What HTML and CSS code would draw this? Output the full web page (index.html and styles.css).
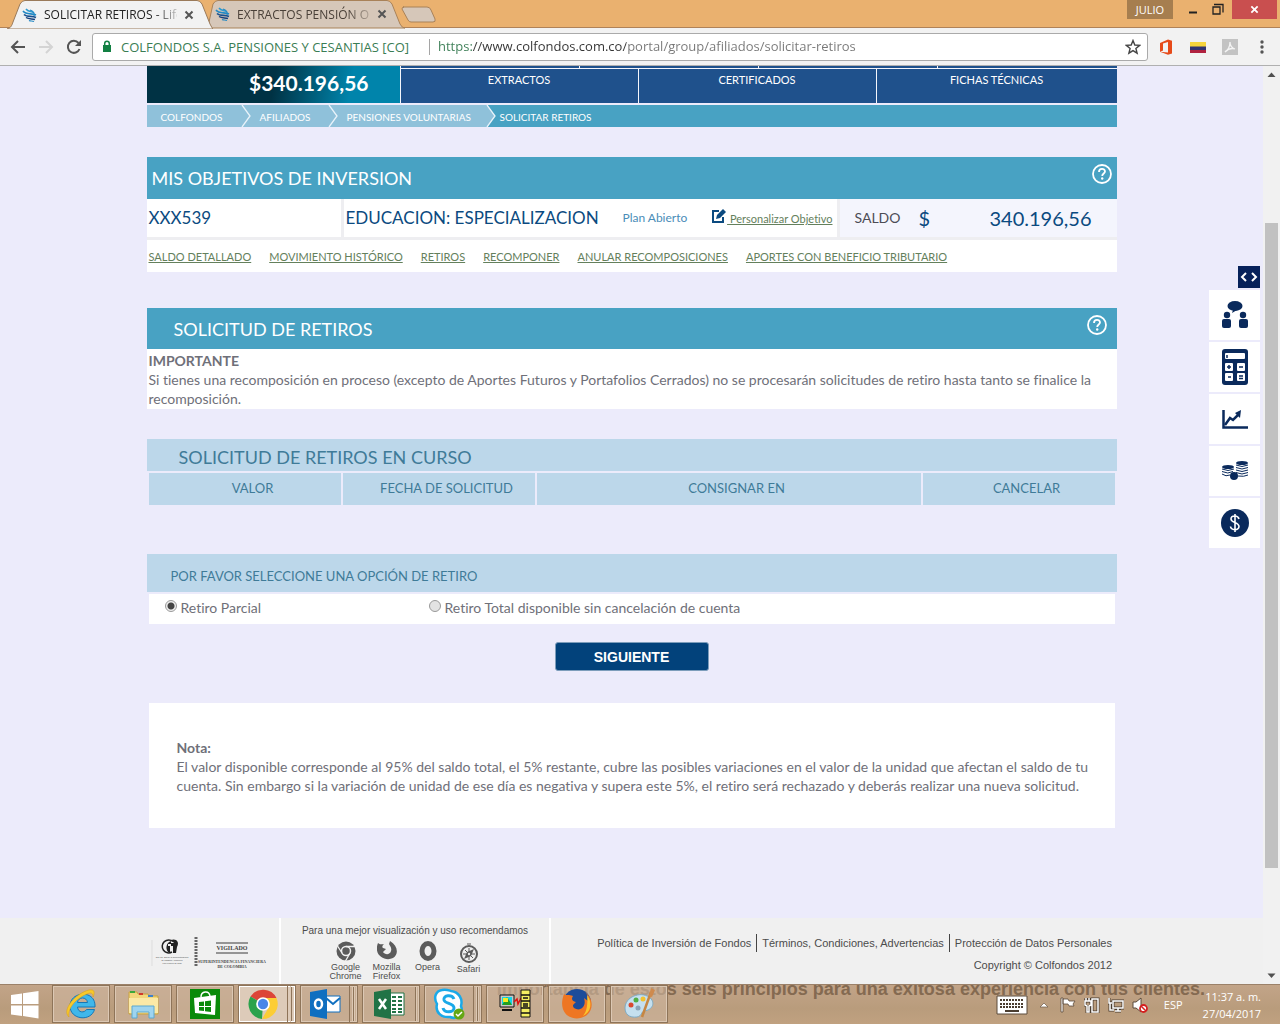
FILE: index.html
```html
<!DOCTYPE html>
<html lang="es">
<head>
<meta charset="utf-8">
<title>Solicitar retiros</title>
<link rel="stylesheet" href="styles.css">
</head>
<body>
<svg class="defs" aria-hidden="true">
  <symbol id="bird" viewBox="0 0 16 16"><path d="M4 2c2 3 5 2 8 4" fill="none" stroke="#2f9ad0" stroke-width="1.500"/><path d="M1 4c3 4 9 2 13 4" fill="none" stroke="#2389c4" stroke-width="1.600"/><path d="M2 7.500c3 3 8 1 12 3" fill="none" stroke="#174f8e" stroke-width="1.700"/><path d="M4 10.500c3 2 6 1 9 2" fill="none" stroke="#16407c" stroke-width="1.500"/><path d="M7 13.500c2 1 3 0 5 1M8 3c3 1 5 3 4 6" fill="none" stroke="#2389c4" stroke-width="1.200"/></symbol>
  <symbol id="x" viewBox="0 0 10 10"><path d="M1.500 1.500l7 7M8.500 1.500l-7 7" stroke="currentColor" stroke-width="2"/></symbol>
  <symbol id="help" viewBox="0 0 20 20"><circle cx="10" cy="10" r="9" fill="none" stroke="#fff" stroke-width="1.800"/><path d="M7 8c0-4 6-4 6-.5 0 2-2.800 2-2.800 4.500" fill="none" stroke="#fff" stroke-width="1.800"/><circle cx="10.200" cy="14.500" r="1.200" fill="#fff"/></symbol>
</svg>

<header class="titlebar">
  <div class="tab tab-active">
    <svg class="tab-shape" viewBox="0 0 206 29"><path d="M0 29C4 28 5 25 6 22L13 4Q15 .5 18 .5H190Q193 .5 195 4L203 24Q205 28 206 29z" fill="#f2f2f2" stroke="#9a7a5a"/></svg>
    <svg class="tab-icon"><use href="#bird"/></svg><span class="tab-title">SOLICITAR RETIROS - Life</span>
    <button class="tab-close" aria-label="Cerrar pestaña"><svg><use href="#x"/></svg></button>
  </div>
  <div class="tab tab-back">
    <svg class="tab-shape" viewBox="0 0 206 29"><path d="M1 28L6 22L10 4Q12 .5 15 .5H184Q187 .5 189 4L197 24Q199 28 202 28z" fill="#d6c7b9" stroke="#a98259"/></svg>
    <svg class="tab-icon"><use href="#bird"/></svg><span class="tab-title">EXTRACTOS PENSIÓN O</span>
    <button class="tab-close" aria-label="Cerrar pestaña"><svg><use href="#x"/></svg></button>
  </div>
  <button class="new-tab" aria-label="Nueva pestaña"><svg viewBox="0 0 36 18"><path d="M2 1H26Q29 1 30 4L34 13Q35 16 32 16H10Q8 16 7 14L1 3Q1 1 3 1z" fill="#d6c7b9" stroke="#a98259"/></svg></button>
  <div class="window-controls">
    <button class="user">JULIO</button>
    <button class="win" aria-label="Minimizar"><svg viewBox="0 0 26 19"><path d="M9 12.500h8" stroke="#222" stroke-width="2"/></svg></button>
    <button class="win" aria-label="Restaurar"><svg viewBox="0 0 26 19"><path d="M7 7h7v7h-7zM8 4.500h9v8" fill="none" stroke="#222" stroke-width="1.300"/></svg></button>
    <button class="win win-close" aria-label="Cerrar"><svg class="close-icon"><use href="#x"/></svg></button>
  </div>
</header>

<nav class="toolbar">
  <button aria-label="Atrás"><svg viewBox="0 0 16 16"><path d="M15 8H2M8 2L2 8l6 6" fill="none" stroke="#555" stroke-width="2"/></svg></button>
  <button aria-label="Adelante"><svg viewBox="0 0 16 16"><path d="M1 8h13M8 2l6 6-6 6" fill="none" stroke="#d4d4d4" stroke-width="2"/></svg></button>
  <button aria-label="Recargar"><svg viewBox="0 0 16 16"><path d="M13.500 10A6 6 0 1 1 12.500 4" fill="none" stroke="#555" stroke-width="2"/><path d="M15 1v6H9z" fill="#555"/></svg></button>
  <div class="address">
    <svg class="lock" viewBox="0 0 10 13"><path d="M1 5h8v7H1z" fill="#128043"/><path d="M2.700 6V3.500a2.300 2.300 0 0 1 4.600 0V6" fill="none" stroke="#128043" stroke-width="1.500"/></svg>
    <label class="identity" for="url">COLFONDOS S.A. PENSIONES Y CESANTIAS [CO]</label>
    <input id="url" class="url" type="text" value="https://www.colfondos.com.co/portal/group/afiliados/solicitar-retiros">
    <button aria-label="Marcar"><svg viewBox="0 0 16 16"><path d="M8 1.500l1.800 4.500 4.900.3-3.800 3.100 1.200 4.800L8 11.600l-4.100 2.600 1.200-4.800L1.300 6.300 6.200 6z" fill="none" stroke="#444" stroke-width="1.400"/></svg></button>
  </div>
  <div class="extensions">
    <button aria-label="Office"><svg viewBox="0 0 16 16"><path d="M2 4l8-3.500 4 1.200v12.800l-4 1.200-8-3 8 .8V3L5 4.500v7L2 13z" fill="#e64a19"/></svg></button>
    <button aria-label="Colombia"><svg viewBox="0 0 16 16"><path d="M0 3h16v5H0z" fill="#f5d43c"/><path d="M0 7.500h16v4H0z" fill="#303470"/><path d="M0 11h16v3H0z" fill="#b02240"/></svg></button>
    <button aria-label="PDF"><svg viewBox="0 0 16 16"><path d="M0 0h16v16H0z" fill="#c3c3c3"/><path d="M3 13c3-2 5-6 5-10 0 4 2 6 5 7-3-1-7 0-10 3z" fill="none" stroke="#f4f4f4" stroke-width="1.300"/></svg></button>
    <button aria-label="Menú"><svg viewBox="0 0 16 16"><g fill="#555"><circle cx="8" cy="3" r="1.700"/><circle cx="8" cy="8" r="1.700"/><circle cx="8" cy="13" r="1.700"/></g></svg></button>
  </div>
</nav>

<div class="viewport">
  <div class="page">
    <main class="content">
      <section class="hero">
        <strong class="balance">$340.196,56</strong>
        <div class="menus">
          <div class="menu-top"><i></i><i></i><i></i><i></i></div>
          <nav class="menu"><a href="#">EXTRACTOS</a><a href="#">CERTIFICADOS</a><a href="#">FICHAS TÉCNICAS</a></nav>
        </div>
      </section>
      <nav class="crumbs">
        <a href="#" class="crumb-1">COLFONDOS</a><svg viewBox="0 0 10 22"><path d="M0 0h1l8 11-8 11H0z" fill="#8fc1da"/><path d="M1 0l8 11-8 11" fill="none" stroke="#e9f3fa" stroke-width="1.300"/></svg>
        <a href="#" class="crumb-2">AFILIADOS</a><svg viewBox="0 0 10 22"><path d="M0 0h1l8 11-8 11H0z" fill="#8fc1da"/><path d="M1 0l8 11-8 11" fill="none" stroke="#e9f3fa" stroke-width="1.300"/></svg>
        <a href="#" class="crumb-3">PENSIONES VOLUNTARIAS</a><svg class="crumb-end" viewBox="0 0 10 22"><path d="M0 0h1l8 11-8 11H0z" fill="#8fc1da"/><path d="M1 0l8 11-8 11" fill="none" stroke="#e9f3fa" stroke-width="1.300"/></svg>
        <span class="crumb-here">SOLICITAR RETIROS</span>
      </nav>

      <section class="goals">
        <h2 class="bar bar-goals">MIS OBJETIVOS DE INVERSION<button aria-label="Ayuda"><svg><use href="#help"/></svg></button></h2>
        <div class="goal">
          <div class="goal-id">XXX539</div>
          <div class="goal-name"><span>EDUCACION: ESPECIALIZACION</span><span class="plan">Plan Abierto</span>
            <a href="#" class="edit"><svg viewBox="0 0 16 16"><path d="M8 3H2v11h10V9" fill="none" stroke="#0b4a80" stroke-width="2"/><path d="M5 11l1-4 6-6 3 3-6 6z" fill="#0b4a80"/></svg><span>&nbsp;Personalizar Objetivo</span></a></div>
          <div class="goal-balance"><span class="saldo">SALDO</span><span>$</span><span class="amount">340.196,56</span></div>
        </div>
        <nav class="links"><a href="#">SALDO DETALLADO</a><a href="#">MOVIMIENTO HISTÓRICO</a><a href="#">RETIROS</a><a href="#">RECOMPONER</a><a href="#">ANULAR RECOMPOSICIONES</a><a href="#">APORTES CON BENEFICIO TRIBUTARIO</a></nav>
      </section>

      <section class="request">
        <h2 class="bar bar-request">SOLICITUD DE RETIROS<button aria-label="Ayuda"><svg><use href="#help"/></svg></button></h2>
        <div class="notice"><b>IMPORTANTE</b><p>Si tienes una recomposición en proceso (excepto de Aportes Futuros y Portafolios Cerrados) no se procesarán solicitudes de retiro hasta tanto se finalice la recomposición.</p></div>
      </section>

      <section class="pending">
        <h3>SOLICITUD DE RETIROS EN CURSO</h3>
        <table><thead><tr><th class="quarter">VALOR</th><th class="quarter">FECHA DE SOLICITUD</th><th>CONSIGNAR EN</th><th class="quarter">CANCELAR</th></tr></thead></table>
      </section>

      <form class="options">
        <h3>POR FAVOR SELECCIONE UNA OPCIÓN DE RETIRO</h3>
        <div class="choices">
          <label><input type="radio" name="retiro" checked>Retiro Parcial</label>
          <label><input type="radio" name="retiro">Retiro Total disponible sin cancelación de cuenta</label>
        </div>
        <button type="button" class="next">SIGUIENTE</button>
      </form>

      <section class="note"><b>Nota:</b><p>El valor disponible corresponde al 95% del saldo total, el 5% restante, cubre las posibles variaciones en el valor de la unidad que afectan el saldo de tu cuenta. Sin embargo si la variación de unidad de ese día es negativa y supera este 5%, el retiro será rechazado y deberás realizar una nueva solicitud.</p></section>
    </main>

    <footer class="footer">
      <div class="seals">
        <svg viewBox="0 0 112 34"><path d="M1 3v26" stroke="#ddd"/><path d="M22 4.500A6.500 6.500 0 1 0 21 15" fill="none" stroke="#222" stroke-width="1.500"/><path d="M20 4a7 7 0 0 0-3 11l2 1V9h-2V7h3zM20 3c5-2 9 2 6 7l-1 6h-3V9h-2V6h3z" fill="#222"/><text x="21" y="21" class="seal-tiny">Res. No. 238 de la Superintendencia</text><text x="21" y="24" class="seal-tiny">de Industria y Comercio</text><text x="21" y="27" class="seal-tiny">9 de Febrero de 1987</text><path d="M45 0v30" stroke="#666" stroke-width="3" stroke-dasharray="2 1"/><path d="M65 6h32M65 16h32" stroke="#777" stroke-width="1.500"/><text x="81" y="13" class="seal-big">VIGILADO</text><text x="81" y="26" class="seal-small">SUPERINTENDENCIA FINANCIERA</text><text x="81" y="31" class="seal-small">DE COLOMBIA</text></svg>
      </div>
      <div class="browsers">
        <p>Para una mejor visualización y uso recomendamos</p>
        <ul>
          <li><svg viewBox="0 0 20 20"><circle cx="10" cy="10" r="9.500" fill="#5b5b5b"/><circle cx="10" cy="10" r="4.500" fill="#5b5b5b" stroke="#f0f0f0" stroke-width="1.500"/><path d="M10 5.500h9M6 12L1.500 5M14 12l-4.500 8" stroke="#f0f0f0" stroke-width="1.300"/></svg>Google<br>Chrome</li>
          <li><svg viewBox="0 0 20 20"><path d="M1 2c2 2 4 1 6 1-2 2-2 3-1 4l3 1-3 3c2 3 7 3 8-1 1-3-1-5-2-7l1-3c8 5 9 13 3 17C8 21-4 14 1 2z" fill="#5b5b5b"/></svg>Mozilla<br>Firefox</li>
          <li><svg viewBox="0 0 20 20"><ellipse cx="10" cy="10" rx="6" ry="7.500" fill="none" stroke="#5b5b5b" stroke-width="5"/></svg>Opera</li>
          <li class="safari"><svg viewBox="0 0 20 20"><circle cx="10" cy="11" r="8" fill="none" stroke="#5b5b5b" stroke-width="2"/><path d="M15 6l-3 7-7 3 3-7z" fill="#5b5b5b"/><path d="M10 5v12M4 11h12M6 7l8 8M8 1h4" stroke="#5b5b5b"/><circle cx="10" cy="11" r="1.200" fill="#f0f0f0"/></svg>Safari</li>
        </ul>
      </div>
      <div class="legal">
        <nav><a href="#">Política de Inversión de Fondos</a><a href="#">Términos, Condiciones, Advertencias</a><a href="#">Protección de Datos Personales</a></nav>
        <p>Copyright © Colfondos 2012</p>
      </div>
    </footer>

    <aside class="dock">
      <button class="toggle" aria-label="Contraer"><svg viewBox="0 0 22 22"><path d="M8 7l-4 4 4 4M14 7l4 4-4 4" fill="none" stroke="#fff" stroke-width="2"/></svg></button>
      <button aria-label="Asesoría"><svg viewBox="0 0 28 36"><g fill="#0a2a5c"><ellipse cx="14" cy="9" rx="7.500" ry="5"/><path d="M12 13l4 0-5 3z"/><circle cx="6" cy="18" r="3.200"/><circle cx="22" cy="18" r="3.200"/><rect x="1" y="22" width="9" height="9" rx="2"/><rect x="18" y="22" width="9" height="9" rx="2"/></g></svg></button>
      <button aria-label="Calculadora"><svg viewBox="0 0 28 36"><rect x="1" y="0" width="26" height="36" rx="3" fill="#0a2a5c"/><g fill="#fff"><rect x="4" y="4" width="20" height="6" rx="1"/><rect x="4" y="14" width="8" height="8" rx="1"/><rect x="16" y="14" width="8" height="8" rx="1"/><rect x="4" y="24" width="8" height="8" rx="1"/><rect x="16" y="24" width="8" height="8" rx="1"/></g><path d="M6 18h4M8 16v4M18 18h4M7 28h3M18 27h4M18 29.500h4M6 6v3" stroke="#0a2a5c" stroke-width="1.500"/></svg></button>
      <button aria-label="Rentabilidad"><svg viewBox="0 0 28 36"><path d="M2.500 9v17.500H27" fill="none" stroke="#0a2a5c" stroke-width="2.500"/><path d="M4 24l5-7 3 2 6-6" fill="none" stroke="#0a2a5c" stroke-width="2.500"/><path d="M20 9l-1 8-5-5z" fill="#0a2a5c"/></svg></button>
      <button aria-label="Aportes"><svg viewBox="0 0 28 36"><g fill="#0a2a5c"><ellipse cx="7" cy="14" rx="6" ry="2"/><ellipse cx="21" cy="10" rx="6" ry="2"/><circle cx="13" cy="23" r="4"/></g><path d="M1 16q6 3 12 0M1 18.500q6 3 11 0M1 21q4 3 8 1M15 12q6 3 12 0M15 14.500q6 3 12 0M15 17q6 3 12 0M15 19.500q6 3 12 0M17 23q6 1 10-1" fill="none" stroke="#0a2a5c"/></svg></button>
      <button aria-label="Pagos"><svg viewBox="0 0 28 36"><circle cx="14" cy="18" r="14" fill="#0a2a5c"/><path d="M18 14c-1-4-8-4-8 0s8 3 8 7.500-8 4-8.500 0M14 9v18" fill="none" stroke="#fff" stroke-width="1.600"/></svg></button>
    </aside>
  </div>
  <div class="scrollbar"><svg viewBox="0 0 17 17"><path d="M4.500 11l4-4.500 4 4.500z" fill="#505050"/></svg><div class="track"><i></i></div><svg viewBox="0 0 17 17"><path d="M4.500 6.500l4 4.500 4-4.500z" fill="#505050"/></svg></div>
</div>

<footer class="taskbar">
  <p class="wallpaper">Importancia de estos seis principios para una exitosa experiencia con tus clientes.</p>
  <button class="start" aria-label="Inicio"><svg viewBox="0 0 28 28"><path d="M0 4l11-1.500V13H0zM12 2.300L27.500 0v13H12zM0 14.500h11V25L0 23.500zM12 14.500h15.500V27.500L12 25z" fill="#fff"/></svg></button>
  <button class="task" aria-label="Internet Explorer"><svg viewBox="0 0 32 32"><path d="M30 19H12.500c.5 6 7 6 9 2.500h8C26 34 5 32 5 18 5 3 31 1 30 19zM12.500 14.500h10c-.5-6-9.500-6-10 0z" fill="#3fb7ea" stroke="#1677b5"/><path d="M4 29C-4 22 11 5 24 2c6-1 6 3 4 7 0-4-2-5-6-3C12 10 2 20 4 29z" fill="#f7c92c" stroke="#d99d13" stroke-width=".5"/></svg></button>
  <button class="task" aria-label="Explorador"><svg viewBox="0 0 32 32"><path d="M2 4h8l1 2h10l1 2h9v18H2z" fill="#f3d77c" stroke="#c8a341"/><path d="M3 3h5v2H3z" fill="#3ba83b"/><path d="M12 5h4v2h-4z" fill="#d2392b"/><path d="M21 7h5v2h-5z" fill="#3d82ce"/><path d="M2 10h29v15H2z" fill="#fbe9a6"/><path d="M5 30V18h22v12h-5v-6H10v6z" fill="#9ed4ef" stroke="#5ba8d0"/></svg></button>
  <button class="task" aria-label="Tienda"><svg viewBox="0 0 32 32"><path d="M1 1h30v30H1z" fill="#0a8a0a"/><path d="M5 10l22-3-1 20-20-2z" fill="#fff"/><path d="M12 9c0-6 8-7 9-1" fill="none" stroke="#fff" stroke-width="1.500"/><path d="M10 14l5-.6V18h-5zM16 13.200l6-.7V18h-6zM10 19h5v4l-5-.5zM16 19h6v5l-6-.7z" fill="#0a8a0a"/></svg></button>
  <button class="task stacked current" aria-label="Chrome"><svg viewBox="0 0 32 32"><path d="M16 16L3.500 8.500A15 15 0 0 1 29.500 10z" fill="#dc4538"/><path d="M16 16L3.500 8.500A15 15 0 0 0 15 31z" fill="#2ba24c"/><path d="M16 10h13.500A15 15 0 0 1 15 31l7-12z" fill="#fccd34"/><circle cx="16" cy="16" r="6" fill="#4a86e8" stroke="#fff" stroke-width="1.700"/></svg></button>
  <button class="task stacked" aria-label="Outlook"><svg viewBox="0 0 32 32"><path d="M17 8h14v16H17z" fill="#fff" stroke="#0f6fc0"/><path d="M17 10l7 6 7-6" fill="none" stroke="#0f6fc0" stroke-width="2"/><path d="M1 4l17-3v30L1 28z" fill="#0f6fc0"/><ellipse cx="9.500" cy="16" rx="3.500" ry="4.500" fill="none" stroke="#fff" stroke-width="2.500"/></svg></button>
  <button class="task stacked-2" aria-label="Excel"><svg viewBox="0 0 32 32"><path d="M17 5h14v22H17z" fill="#fff" stroke="#217346"/><path d="M19 9h10M19 13h10M19 17h10M19 21h10M19 24h10" stroke="#217346" stroke-width="2" stroke-dasharray="4 2"/><path d="M1 4l17-3v30L1 28z" fill="#217346"/><path d="M6 11l7 10M13 11L6 21" stroke="#fff" stroke-width="2.500"/></svg></button>
  <button class="task stacked" aria-label="Skype"><svg viewBox="0 0 32 32"><path d="M9 2c4-1 6 0 9 1 8 1 12 8 10 15 3 8-4 14-11 11C8 30 2 24 4 16 0 9 3 3 9 2z" fill="#fff" stroke="#1aa9e8" stroke-width="2.500"/><path d="M21 11c-2-5-11-4-10 1 1 4 10 3 10 8s-10 5-11 0" fill="none" stroke="#1aa9e8" stroke-width="3"/><circle cx="26" cy="26" r="5.500" fill="#63a714"/><path d="M23 26l2 2 4-4" fill="none" stroke="#fff" stroke-width="1.500"/></svg></button>
  <button class="task" aria-label="Conexión remota"><svg viewBox="0 0 32 32"><path d="M1 7h14v12H1z" fill="#c8c8c8" stroke="#111"/><path d="M3 9h10v8H3z" fill="#14d4e8"/><path d="M8 9l5 8H3z" fill="#24a020"/><path d="M4 10h5v4H4z" fill="#f6ee20"/><path d="M3 22h10" stroke="#111" stroke-width="2"/><path d="M15 14l3-3 1 5 3-6" fill="none" stroke="#e01010" stroke-width="1.500"/><path d="M22 2h9v27h-9z" fill="#f4ee62" stroke="#111"/><path d="M22 7h9M22 13h9M22 20h9M22 25h9M24 10h5M24 16h5M24 18h5" stroke="#111" stroke-width="1.300"/></svg></button>
  <button class="task" aria-label="Firefox"><svg viewBox="0 0 32 32"><circle cx="16" cy="15" r="14" fill="#1d4c9a"/><path d="M3 6c2 2 5 0 9 2-2 3-1 5 3 6-3 3-4 3-2 6 6 4 13-1 10-10l4 3c1-4-1-7-3-9 8 6 9 17 2 23C14 36-5 27 3 6z" fill="#ee7623"/><path d="M26 7c6 8 4 17-4 21 4-5 5-12 4-21z" fill="#fbc52d"/></svg></button>
  <button class="task" aria-label="Paint"><svg viewBox="0 0 32 32"><path d="M2 20C2 9 17 3 26 9c7 5 4 13-5 14-3 1-2 5-7 6C6 30 2 26 2 20z" fill="#c5e0ef" stroke="#7fabc4"/><circle cx="8" cy="17" r="2.500" fill="#d9482f"/><circle cx="13" cy="12" r="2.500" fill="#50ae45"/><circle cx="20" cy="11" r="2.500" fill="#f1c232"/><circle cx="15" cy="20" r="2.500" fill="#8aa4b8"/><path d="M28 4L19 29" stroke="#c68642" stroke-width="2.500"/><path d="M26 8l2-8 4 2-3 7z" fill="#cf8a4d"/></svg></button>
  <div class="tray">
    <svg class="keyboard" viewBox="0 0 32 20"><path d="M1 1h30v18H1z" fill="#fff" stroke="#5a4a3a"/><path d="M4 5h24M4 9h24M4 12h24" stroke="#4a3d30" stroke-width="2" stroke-dasharray="2 1"/><path d="M9 16h14" stroke="#4a3d30" stroke-width="2"/></svg>
    <svg viewBox="0 0 16 16"><path d="M4 10l4-4 4 4z" fill="#fff" stroke="#6b5947" stroke-width=".7"/></svg>
    <svg viewBox="0 0 16 16"><path d="M1 1h2v14H1zM3 2h5l1 2h6l-2 3 1 2H9L8 7H3z" fill="#fff" stroke="#5a4a3a" stroke-width=".8"/></svg>
    <svg viewBox="0 0 16 16"><path d="M9 2h5v13H8V2zM1 4h6v4L5 9v6H3V9L1 8zM2 1v3M5 1v3" fill="none" stroke="#4a3d30" stroke-width="3"/><path d="M9 2h5v13H8V2zM1 4h6v4L5 9v6H3V9L1 8zM2 1v3M5 1v3" fill="none" stroke="#fff" stroke-width="1.500"/></svg>
    <svg viewBox="0 0 16 16"><path d="M5 4h10v7H5zM7 14h6M10 11v3M1 1v5h3M2 6v7h4" fill="none" stroke="#4a3d30" stroke-width="3"/><path d="M5 4h10v7H5zM7 14h6M10 11v3M1 1v5h3M2 6v7h4" fill="none" stroke="#fff" stroke-width="1.500"/></svg>
    <svg viewBox="0 0 16 16"><path d="M1 5h3l5-4v14l-5-4H1z" fill="#fff" stroke="#5a4a3a"/><circle cx="11.500" cy="11.500" r="3.500" fill="#fff" stroke="#d42020" stroke-width="1.800"/><path d="M9 9l5 5" stroke="#d42020" stroke-width="1.500"/></svg>
    <span class="lang">ESP</span>
    <time>11:37 a. m.<br>27/04/2017</time>
  </div>
</footer>
</body>
</html>
```
FILE: styles.css
```css
* { box-sizing: border-box; }
html, body { height: 100%; margin: 0; }
body { display: flex; flex-direction: column; overflow: hidden; font-family: Lato, "Open Sans", sans-serif; font-size: 14px; line-height: 19px; font-variant-ligatures: none; color: #6f7079; }
h2, h3, p, ul { margin: 0; padding: 0; font-weight: 400; }
button { padding: 0; border: 0; background: none; font: inherit; color: inherit; }
a { color: inherit; text-decoration: none; }
svg { display: block; flex: none; }
.defs { position: absolute; width: 0; height: 0; }

/* Browser window */
.titlebar { display: flex; flex: none; height: 28px; background: #eab16f; border-bottom: 1px solid #b08258; font-family: "Open Sans", sans-serif; }
.tab { position: relative; display: flex; align-items: center; width: 206px; height: 28px; padding-left: 15px; color: #222; font-size: 12px; }
.tab-active { z-index: 1; margin-left: 7px; height: 29px; }
.tab-back { width: 190px; padding-left: 2px; color: #4a4038; }
.tab-back .tab-shape { left: -10px; }
.tab-shape { position: absolute; left: 0; top: 0; width: 206px; height: 29px; }
.tab-icon { position: relative; width: 16px; height: 16px; }
.tab-title { position: relative; width: 133px; margin-left: 6px; white-space: nowrap; -webkit-mask-image: linear-gradient(90deg, #000 110px, transparent 140px); mask-image: linear-gradient(90deg, #000 110px, transparent 140px); }
.tab-close { position: relative; margin-left: 7px; color: #555; }
.tab-close svg, .close-icon { width: 10px; height: 10px; }
.new-tab svg { width: 36px; height: 18px; margin-top: 3px; }
.new-tab { margin-left: -2px; }
.window-controls { display: flex; align-items: flex-start; height: 19px; margin: 0 3px 0 auto; }
.user { width: 46px; height: 19px; margin-right: 7px; background: #a67e4f; color: #fff; font-size: 11px; }
.win { display: flex; align-items: center; justify-content: center; width: 26px; height: 19px; color: #fff; }
.win svg { width: 26px; height: 19px; }
.win-close { width: 45px; background: #c94f4f; }
.win .close-icon { width: 9px; height: 9px; }
.toolbar { display: flex; flex: none; align-items: center; height: 38px; padding: 0 10px; gap: 12px; background: #f2f2f2; border-bottom: 1px solid #b0b0b0; font-family: "Open Sans", sans-serif; }
.toolbar svg { width: 16px; height: 16px; }
.address { display: flex; flex: 1; align-items: center; height: 28px; margin-left: -2px; padding: 0 6px 0 9px; background: #fff; border: 1px solid #aaa; border-radius: 3px; font-size: 13px; }
.address .lock { width: 10px; height: 13px; }
.identity { width: 309px; margin-left: 9px; border-right: 1px solid #a5a5a5; color: #3a7d54; line-height: 16px; white-space: nowrap; }
.url { flex: 1; min-width: 0; margin-left: 8px; padding: 0; border: 0; outline: 0; font: inherit; color: transparent; background: linear-gradient(90deg, #3a7d54 34px, #333 34px, #333 188px, #777 188px); -webkit-background-clip: text; background-clip: text; }
.extensions { display: flex; gap: 16px; margin-left: -2px; }

/* Page */
.viewport { display: flex; flex: 1; min-height: 0; }
.page { position: relative; display: flex; flex: 1; flex-direction: column; min-width: 0; background: #ecebfb; }
.content { width: 970px; max-width: 100%; margin: 0 auto; }
.hero { display: flex; height: 37px; background: #f4f6fc; gap: 1px; }
.balance { width: 253px; padding-right: 31px; background: linear-gradient(100deg, #003244 50%, #0084ab 80%); color: #fff; font-size: 21px; line-height: 33px; text-align: right; }
.menus { display: flex; flex: 1; flex-direction: column; gap: 1px; }
.menu-top, .menu { display: grid; gap: 1px; }
.menu-top { grid-template-columns: repeat(4, 1fr); height: 2px; }
.menu-top i, .menu a { background: #1f518c; }
.menu { flex: 1; grid-template-columns: 237px 237px 1fr; }
.menu a { padding-top: 1px; color: #fff; font-size: 11px; text-align: center; }
.crumbs { display: flex; height: 22px; margin-top: 2px; background: #48a2c3; color: #fff; font-size: 10px; line-height: 24px; }
.crumbs a { background: #8fc1da; padding-left: 14px; }
.crumbs svg { width: 10px; height: 22px; background: #8fc1da; }
.crumbs .crumb-end { background: none; }
.crumb-1 { width: 94px; }
.crumb-2 { width: 77px; }
.crumb-3 { width: 148px; }
.crumbs .crumb-2, .crumbs .crumb-3 { padding-left: 9px; }
.crumb-here { padding-left: 4px; }
.bar { display: flex; align-items: flex-start; justify-content: space-between; height: 42px; background: #48a2c3; color: #fff; font-size: 18px; line-height: 42px; }
.bar svg { width: 20px; height: 20px; margin-top: 7px; }
.goals { margin-top: 30px; }
.bar-goals { padding: 0 5px; }
.goal { display: grid; grid-template-columns: 194px 493px 1fr; gap: 3px; background: #eeeef1; border-bottom: 3px solid #eeeef1; color: #0b4a80; font-size: 17px; line-height: 38px; }
.goal > div { height: 38px; background: #fff; padding-left: 2px; white-space: nowrap; }
.goal-name { display: flex; justify-content: space-between; padding-right: 4px; }
.plan { color: #4a8db8; font-size: 12px; }
.edit { display: flex; color: #64805c; font-size: 11px; text-decoration: underline; line-height: 40px; }
.edit svg { width: 16px; height: 16px; margin-top: 9px; }
.goal > .goal-balance { display: flex; padding: 0 25px 0 15px; background: #f4f5fd; font-size: 20px; }
.saldo { width: 64px; color: #4c4c55; font-size: 14px; }
.amount { margin-left: auto; }
.links { display: flex; gap: 18px; padding-left: 2px; background: #fff; color: #64805c; font-size: 11px; line-height: 32px; }
.links a { height: 32px; padding-top: 1px; text-decoration: underline; }
.request { margin-top: 36px; }
.bar-request { height: 41px; padding: 0 10px 0 27px; }
.notice { padding: 2px 2px 1px; background: #fff; }
.pending { margin-top: 30px; color: #3f7b98; }
.pending h3 { padding: 4px 32px 0; background: #bcd7ea; font-size: 18px; line-height: 28px; }
.pending table { width: 100%; border-spacing: 2px; table-layout: fixed; }
.pending th { height: 32px; padding: 0 0 2px 16px; background: #bcd7ea; font-size: 13px; font-weight: 400; }
.quarter { width: 192px; }
.options { display: flex; flex-direction: column; margin-top: 47px; }
.options h3 { padding: 7px 24px 0; background: #bcd7ea; color: #3f7b98; font-size: 13px; line-height: 31px; }
.choices { display: grid; grid-template-columns: 264px 1fr; margin: 2px 2px 0; padding-left: 16px; background: #fff; line-height: 28px; }
.choices label { display: flex; align-items: flex-start; height: 30px; gap: 4px; }
.choices input { appearance: none; width: 12px; height: 12px; margin: 6px 0 0; border: 1px solid #999; border-radius: 50%; background: #e3e3e3; }
.choices input:checked { background: radial-gradient(#444 3px, #eee 4px); }
.next { align-self: center; width: 154px; height: 29px; margin: 18px 0 0; border: 1px solid #7d9dbb; border-radius: 3px; background: #02427b; color: #fff; font: bold 14px "Liberation Sans", sans-serif; }
.note { margin: 32px 2px 0; padding: 35px 20px 33px 28px; background: #fff; }

.footer { display: flex; height: 66px; margin-top: auto; background: #f0f0f0; color: #4c4c4c; font-family: "Liberation Sans", sans-serif; font-size: 11px; }
.seals { width: 281px; padding: 19px 0 0 151px; border-right: 2px solid #fff; }
.seals svg { width: 112px; height: 34px; overflow: visible; }
.seals text { text-anchor: middle; fill: #444; }
.seal-big { font: bold 6px "Liberation Serif", serif; }
.seal-small { font: bold 4px "Liberation Serif", serif; }
.seal-tiny { font: 2px "Liberation Sans", sans-serif; }
.browsers { width: 270px; padding-top: 5px; border-right: 2px solid #fff; font-size: 10px; text-align: center; line-height: 16px; }
.browsers ul { display: flex; justify-content: center; margin: 2px 16px 0 0; gap: 10px; list-style: none; font-size: 9px; line-height: 9px; }
.browsers li { display: flex; flex-direction: column; align-items: center; width: 31px; }
.browsers li svg { width: 20px; height: 20px; margin-bottom: 2px; }
.browsers .safari { padding-top: 2px; }
.legal { flex: 1; padding: 16px 151px 0 0; text-align: right; }
.legal nav { display: flex; justify-content: flex-end; line-height: 18px; }
.legal a + a { margin-left: 5px; padding-left: 5px; border-left: 1px solid #444; }
.legal p { line-height: 26px; }

.dock { position: absolute; right: 3px; top: 200px; display: flex; flex-direction: column; align-items: flex-end; gap: 2px; }
.dock button { display: flex; align-items: center; justify-content: center; width: 51px; height: 50px; background: #fff; }
.dock svg { width: 28px; height: 36px; }
.dock .toggle { width: 22px; height: 22px; background: #06215a; }
.dock .toggle svg { width: 22px; height: 22px; }
.scrollbar { display: flex; flex-direction: column; width: 17px; background: #f1f1f1; }
.scrollbar svg { width: 17px; height: 17px; }
.track { display: flex; flex: 1; flex-direction: column; }
.track i { width: 13px; height: 73%; margin: 140px auto 0; background: #c1c1c1; }

/* Windows taskbar */
.taskbar { position: relative; display: flex; flex: none; gap: 4px; height: 40px; background: linear-gradient(180deg, #c2a488, #b99c7c 60%, #c0a180); overflow: hidden; border-top: 1px solid #9b8169; font-family: "Open Sans", sans-serif; }
.wallpaper { position: absolute; right: 75px; top: -6px; color: #846a51; font: bold 18px "Liberation Sans", sans-serif; white-space: nowrap; }
.start { width: 48px; padding-left: 11px; }
.start svg { width: 28px; height: 28px; }
.task { position: relative; display: flex; align-items: center; justify-content: center; width: 58px; height: 38px; background: rgba(205, 180, 156, .65); border: 1px solid #8e7459; box-shadow: inset 0 0 0 1px #dcc8b4; }
.task svg { width: 32px; height: 32px; }
.stacked { padding-right: 8px; }
.stacked, .stacked-2 { background-image: linear-gradient(90deg, #8e7459 1px, #dcc8b4 1px, #dcc8b4 2px, transparent 2px); background-size: 4px 100%; background-position: right; background-repeat: no-repeat; }
.stacked::before { content: ""; position: absolute; right: 4px; top: 0; bottom: 0; width: 2px; border-left: 1px solid #8e7459; border-right: 1px solid #dcc8b4; }
.stacked-2 { padding-right: 4px; }
.current { background-color: #ddcbb9; box-shadow: inset 0 0 0 1px #fff; }
.tray { position: relative; display: flex; align-items: center; gap: 8px; margin: 0 19px 0 auto; color: #fff; font-size: 11px; line-height: 17px; }
.tray svg { width: 16px; height: 16px; }
.tray .keyboard { width: 32px; height: 20px; }
.lang { margin: 0 12px 0 8px; }
.tray time { text-align: right; white-space: nowrap; }
```
